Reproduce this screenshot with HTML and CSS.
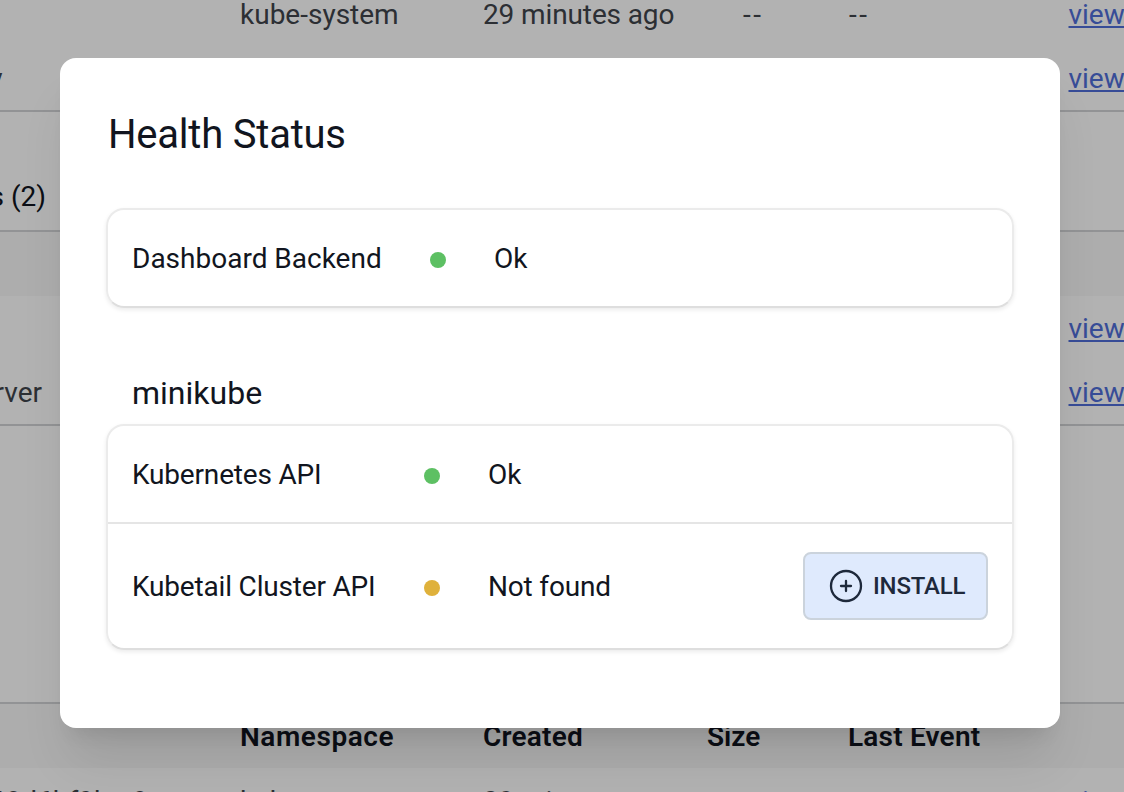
FILE: index.html
```html
<!DOCTYPE html>
<html lang="en">
<head>
<meta charset="utf-8">
<title>Health Status</title>
<link rel="stylesheet" href="styles.css">
</head>
<body>
<main class="page">
  <div class="row row-first"><span></span><span>kube-system</span><span class="age">29 minutes ago</span><span class="dash dash-size">--</span><span class="dash">--</span><a class="link">view</a></div>
  <div class="row"><span class="name name-proxy">kube-proxy</span><span></span><span></span><span></span><span></span><a class="link">view</a></div>
  <div class="section"><span class="name name-section">Deployments (2)</span></div>
  <div class="head"></div>
  <div class="row"><span></span><span></span><span></span><span></span><span></span><a class="link">view</a></div>
  <div class="row"><span class="name name-server">server</span><span></span><span></span><span></span><span></span><a class="link">view</a></div>
  <div class="gap"></div>
  <div class="row head"><span></span><span class="head-wide">Namespace</span><span>Created</span><span class="head-tight">Size</span><span>Last Event</span><span></span></div>
  <div class="row row-last"><span class="name name-pod">668d6bf9bc-8vmzt</span><span>kube-system</span><span class="age">29 minutes ago</span><span class="dash dash-size">--</span><span class="dash">--</span><a class="link">view</a></div>
</main>
<div class="overlay">
  <section class="dialog">
    <h1 class="title">Health Status</h1>
    <div class="card">
      <div class="item item-single"><span>Dashboard Backend</span><i class="dot ok"></i><span>Ok</span></div>
    </div>
    <h2 class="cluster">minikube</h2>
    <div class="card">
      <div class="item"><span class="tight">Kubernetes API</span><i class="dot ok"></i><span>Ok</span></div>
      <div class="item item-action"><span class="tight">Kubetail Cluster API</span><i class="dot warn"></i><span class="tight">Not found</span>
        <button class="install"><svg class="icon" viewBox="0 0 34 34" fill="none" stroke="currentColor" stroke-width="2.3" stroke-linecap="round"><circle cx="17" cy="17" r="15"/><path d="M17 12v10M12 17h10"/></svg>INSTALL</button>
      </div>
    </div>
  </section>
</div>
</body>
</html>
```
FILE: styles.css
```css
* { box-sizing: border-box; }
body { margin: 0; width: 1124px; height: 792px; overflow: hidden; position: relative; font: 28px/40px Roboto, sans-serif; color: #111520; background: #fff; }
.page { height: 792px; overflow: hidden; }
.row { display: grid; grid-template-columns: 240px 243px 224px 141px 220.5px 55.5px; height: 64px; padding-top: 2px; align-items: center; color: #40444b; white-space: nowrap; }
.row-first { margin-top: -18px; }
.row-last { padding-top: 4px; }
.name { display: flex; justify-content: flex-end; overflow: hidden; white-space: nowrap; }
.name-proxy { padding-right: 237.5px; }
.name-server { padding-right: 198px; }
.name-section { width: 240px; padding-right: 194px; }
.name-pod { padding-right: 31px; }
.age { letter-spacing: -.12px; }
.dash { padding-left: 1px; letter-spacing: 2.5px; }
.dash-size { padding-left: 36px; }
.link { color: #4f6ed8; text-decoration: underline; text-decoration-thickness: 2px; text-underline-offset: 2px; }
.section { display: flex; align-items: center; height: 122px; padding-top: 52px; border-top: 2px solid #d1d3d6; border-bottom: 2px solid #d1d3d6; }
.head { height: 64px; background: #f8f8f8; color: #111520; font-weight: 600; letter-spacing: .2px; }
.head-wide { letter-spacing: .55px; }
.head-tight { letter-spacing: 0; }
.gap { height: 280px; border: solid #d1d3d6; border-width: 2px 0; }
.overlay { position: absolute; inset: 0; padding: 58px 64px 0 60px; background: rgba(0, 0, 0, .3); }
.dialog { width: 1000px; height: 670px; padding: 49px 46px; border-radius: 16px; background: #fff; box-shadow: 0 40px 50px -10px rgba(0, 0, 0, .1), 0 16px 20px -12px rgba(0, 0, 0, .1); }
.title { margin: 0 0 45px 2px; font-size: 40px; line-height: 56px; font-weight: 400; letter-spacing: -.22px; }
.card { border: 2px solid #ebebeb; border-bottom-color: #dedede; border-radius: 18px; box-shadow: 0 2px 4px rgba(0, 0, 0, .08); }
.item { display: grid; grid-template-columns: 292px 64px 1fr auto; align-items: center; height: 96px; padding: 1px 24px 0; }
.item-single { grid-template-columns: 298px 64px 1fr; padding-top: 2px; }
.item-action { height: 126px; border-top: 2px solid #e5e5e5; }
.tight { letter-spacing: -.18px; }
.dot { width: 16px; height: 16px; margin-top: 2px; border-radius: 50%; }
.ok { background: #5dc063; }
.warn { background: #dfb13b; }
.cluster { margin: 61px 0 7px 26px; font-size: 32px; line-height: 48px; font-weight: 400; }
.install { display: flex; align-items: center; gap: 10px; width: 185px; height: 68px; margin-top: -1px; padding: 0 0 0 24px; border: 2px solid #cbd3dc; border-radius: 8px; background: #dfeafd; color: #1e293b; font: 500 24px Roboto, sans-serif; letter-spacing: -.2px; }
.icon { width: 34px; height: 34px; }
```
